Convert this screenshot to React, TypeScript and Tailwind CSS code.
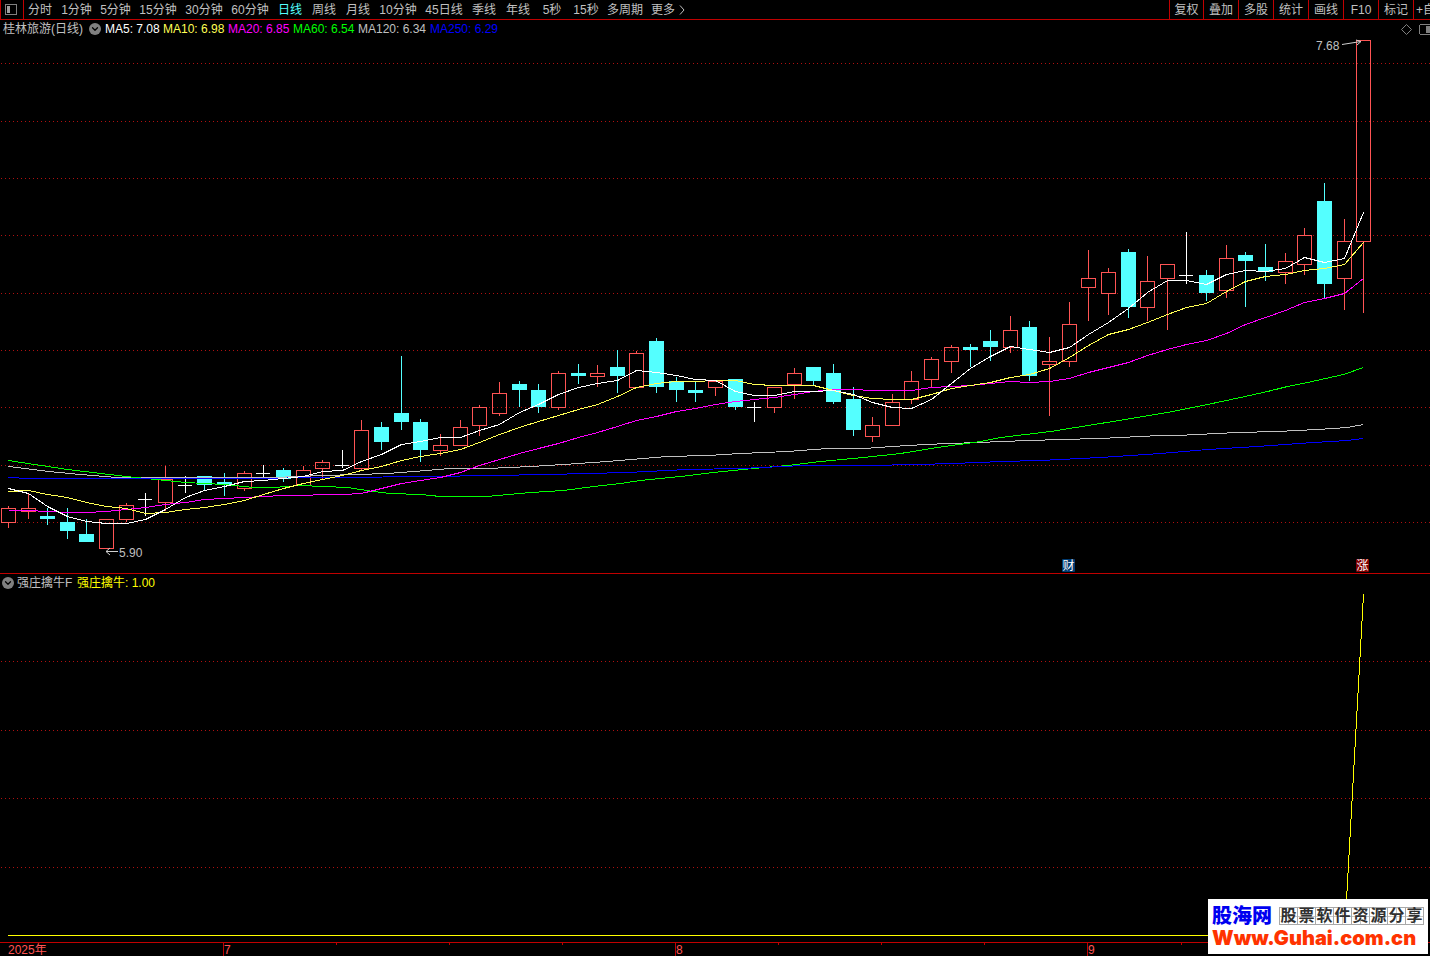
import { ChevronDown } from "lucide-react";
import clsx from "clsx";

const periods = [
  { label: "分时", width: "w-[26px]" },
  { label: "1分钟", width: "w-[31px]" },
  { label: "5分钟", width: "w-[31px]" },
  { label: "15分钟", width: "w-[38px]" },
  { label: "30分钟", width: "w-[38px]" },
  { label: "60分钟", width: "w-[38px]" },
  { label: "日线", width: "w-[26px]", active: true },
  { label: "周线", width: "w-[26px]" },
  { label: "月线", width: "w-[26px]" },
  { label: "10分钟", width: "w-[38px]" },
  { label: "45日线", width: "w-[38px]" },
  { label: "季线", width: "w-[26px]" },
  { label: "年线", width: "w-[26px]" },
  { label: "5秒", width: "w-[26px]" },
  { label: "15秒", width: "w-[26px]" },
  { label: "多周期", width: "w-[36px]" },
];

const tools = ["复权", "叠加", "多股", "统计", "画线", "F10", "标记"];

const legend = [
  { text: "MA5: 7.08", style: "w-[58px] text-white" },
  { text: "MA10: 6.98", style: "w-[65px] text-[#ffff54]" },
  { text: "MA20: 6.85", style: "w-[65px] text-[#ff00ff]" },
  { text: "MA60: 6.54", style: "w-[65px] text-[#00ff00]" },
  { text: "MA120: 6.34", style: "w-[72px] text-[#c0c0c0]" },
  { text: "MA250: 6.29", style: "w-[72px] text-[#0000ff]" },
];

type Kind = "up" | "down" | "flat";
type Candle = [kind: Kind, high: number, top: number, bottom: number, low: number];
type Point = [number, number];

// chart units, y grows downwards
const candles: Candle[] = [
  ["up", 506, 508, 522, 527],
  ["up", 493, 508, 511, 518],
  ["down", 508, 516, 518, 524],
  ["down", 508, 522, 530, 538],
  ["down", 519, 534, 541, 541],
  ["up", 519, 519, 548, 548],
  ["up", 503, 505, 519, 521],
  ["flat", 493, 499, 499, 515],
  ["up", 466, 479, 502, 510],
  ["flat", 476, 485, 485, 492],
  ["down", 476, 476, 484, 490],
  ["down", 473, 482, 484, 495],
  ["up", 471, 473, 488, 490],
  ["flat", 465, 473, 473, 476],
  ["down", 468, 470, 478, 481],
  ["up", 466, 470, 485, 485],
  ["up", 460, 462, 468, 479],
  ["flat", 450, 465, 465, 467],
  ["up", 420, 430, 468, 469],
  ["down", 422, 427, 441, 449],
  ["down", 356, 413, 421, 429],
  ["down", 419, 422, 449, 461],
  ["up", 434, 445, 450, 455],
  ["up", 420, 427, 445, 445],
  ["up", 405, 407, 425, 435],
  ["up", 382, 393, 413, 415],
  ["down", 381, 384, 389, 406],
  ["down", 384, 390, 406, 412],
  ["up", 371, 373, 407, 409],
  ["down", 364, 373, 375, 383],
  ["up", 365, 373, 376, 386],
  ["down", 350, 367, 375, 392],
  ["up", 351, 353, 387, 387],
  ["down", 338, 341, 386, 392],
  ["down", 377, 381, 389, 401],
  ["down", 381, 390, 392, 401],
  ["up", 381, 381, 387, 395],
  ["down", 379, 379, 406, 409],
  ["flat", 402, 407, 407, 421],
  ["up", 387, 387, 407, 412],
  ["up", 368, 373, 384, 398],
  ["down", 367, 367, 380, 385],
  ["down", 364, 373, 401, 403],
  ["down", 387, 399, 429, 435],
  ["up", 417, 425, 436, 441],
  ["up", 394, 402, 425, 425],
  ["up", 371, 381, 399, 403],
  ["up", 357, 359, 379, 386],
  ["up", 345, 347, 361, 372],
  ["down", 344, 347, 349, 366],
  ["down", 330, 341, 346, 360],
  ["up", 316, 330, 347, 352],
  ["down", 321, 327, 375, 380],
  ["up", 337, 361, 364, 415],
  ["up", 302, 324, 361, 366],
  ["up", 250, 278, 287, 320],
  ["up", 268, 272, 293, 314],
  ["down", 249, 252, 306, 317],
  ["up", 256, 281, 307, 320],
  ["up", 264, 264, 278, 329],
  ["flat", 232, 275, 275, 283],
  ["down", 270, 275, 292, 300],
  ["up", 245, 258, 290, 297],
  ["down", 252, 255, 260, 306],
  ["down", 244, 267, 271, 280],
  ["up", 253, 261, 272, 283],
  ["up", 228, 235, 264, 274],
  ["down", 183, 201, 283, 297],
  ["up", 219, 241, 278, 309],
  ["up", 40, 40, 241, 312],
];

const candleX = (i: number) => Math.floor(8.42 + i * 19.642);
const closes = candles.map(([kind, , top, bottom]) => (kind === "down" ? bottom : top));

// lead holds the averages for the days whose window starts before the first candle
function movingAverage(days: number, lead: number[]): Point[] {
  return closes.map((_, i) => {
    if (i < lead.length) return [candleX(i), lead[i]];
    const slice = closes.slice(i - days + 1, i + 1);
    return [candleX(i), Math.round(slice.reduce((a, b) => a + b, 0) / days)];
  });
}

const ma5 = movingAverage(5, [488, 493, 506, 516]);
const ma10 = movingAverage(10, [491, 490, 494, 497, 502, 506, 508, 513, 512]);
const ma20 = movingAverage(
  20,
  [510, 510, 511, 512, 512, 511, 509, 507, 504, 502, 499, 498, 497, 496, 495, 495, 494, 494, 493],
);
const ma60: Point[] = [
  [8, 460], [67, 469], [126, 476], [145, 478], [185, 482], [224, 484], [253, 487], [273, 487],
  [300, 485], [323, 486], [347, 487], [373, 491], [390, 493], [420, 494], [440, 496], [487, 496],
  [497, 495], [530, 492], [563, 490], [593, 486], [620, 483], [640, 480], [680, 476], [713, 472],
  [753, 468], [787, 465], [820, 461], [863, 457], [900, 453], [937, 447], [980, 441], [1000, 437],
  [1050, 431], [1100, 423], [1167, 412], [1207, 404], [1240, 397], [1267, 391], [1287, 386],
  [1307, 382], [1343, 374], [1363, 367],
];
const ma120: Point[] = [
  [8, 466], [48, 471], [80, 474], [117, 477], [140, 477], [273, 477], [297, 476], [323, 475],
  [357, 474], [387, 473], [413, 471], [450, 468], [487, 468], [530, 466], [563, 464], [607, 461],
  [667, 456], [707, 455], [740, 453], [787, 451], [827, 448], [863, 448], [907, 445], [947, 443],
  [980, 442], [1000, 441], [1060, 439], [1100, 438], [1160, 435], [1177, 435], [1237, 432],
  [1277, 431], [1317, 429], [1347, 427], [1363, 424],
];
const ma250: Point[] = [
  [8, 477], [28, 478], [240, 478], [430, 476], [490, 475], [547, 474], [627, 472], [687, 469],
  [740, 468], [803, 465], [863, 465], [920, 464], [980, 462], [1000, 461], [1040, 460],
  [1100, 457], [1160, 453], [1207, 449], [1257, 446], [1313, 442], [1347, 440], [1363, 438],
];

const averages: [string, Point[]][] = [
  ["#c0c0c0", ma120],
  ["#00ff00", ma60],
  ["#0000ff", ma250],
  ["#ff00ff", ma20],
  ["#ffff54", ma10],
  ["#ffffff", ma5],
];

const months = [
  { x: 223, label: "7" },
  { x: 675, label: "8" },
  { x: 1087, label: "9" },
];
const weekTicks = [336, 449, 562, 778, 881, 984, 1181];

function Grid({ rows }: { rows: number[] }) {
  return (
    <g stroke="#b01010" strokeDasharray="1 3">
      {rows.map((y) => (
        <path key={y} d={`M1 ${y + 0.5}H1430`} />
      ))}
    </g>
  );
}

function Polyline({ color, points }: { color: string; points: Point[] }) {
  return (
    <polyline
      fill="none"
      stroke={color}
      points={points.map(([x, y]) => `${x + 0.5},${y + 0.5}`).join(" ")}
    />
  );
}

function CandleShape({ candle, x }: { candle: Candle; x: number }) {
  const [kind, high, top, bottom, low] = candle;
  const c = x + 0.5;
  if (kind === "flat") {
    return <path d={`M${c} ${high}V${low + 1}M${x - 7} ${top + 0.5}H${x + 7}`} stroke="#fff" />;
  }
  if (kind === "down") {
    return (
      <g>
        <path d={`M${c} ${high}V${low + 1}`} stroke="#54ffff" />
        <rect x={x - 7} y={top} width={15} height={bottom - top + 1} fill="#54ffff" />
      </g>
    );
  }
  return (
    <g stroke="#ff5454" fill="none">
      <path d={`M${c} ${high}V${top}M${c} ${bottom}V${low + 1}`} />
      <rect x={x - 6.5} y={top + 0.5} width={14} height={bottom - top} />
    </g>
  );
}

function Flag({ x, label, fill }: { x: number; label: string; fill: string }) {
  return (
    <g>
      <rect x={x} y={559} width={13} height={13} rx={1} fill={fill} />
      <text x={x + 6.5} y={570} textAnchor="middle" fontSize={12} fill="#fff">
        {label}
      </text>
    </g>
  );
}

function PriceChart() {
  return (
    <svg viewBox="0 38 1430 535" className="block h-auto w-full" role="img" aria-label="日线">
      <g shapeRendering="crispEdges">
        <Grid rows={[63, 121, 178, 235, 293, 350, 407, 465, 522]} />
        {candles.map((candle, i) => (
          <CandleShape key={i} candle={candle} x={candleX(i)} />
        ))}
        {averages.map(([color, points]) => (
          <Polyline key={color} color={color} points={points} />
        ))}
      </g>
      <g stroke="#d0d0d0" fill="none">
        <path d="M1342 44.5L1361 41.5M1356 40L1361 41.5L1357 45" />
        <path d="M118 551.5H106M110 548L106 551.5L110 555" />
      </g>
      <g fontSize={12} fill="#c0c0c0">
        <text x={1316} y={50}>7.68</text>
        <text x={119} y={557}>5.90</text>
      </g>
      <Flag x={1062} label="财" fill="#003a70" />
      <Flag x={1356} label="涨" fill="#800000" />
    </svg>
  );
}

function SignalChart() {
  return (
    <svg viewBox="0 591 1430 351" className="block h-auto w-full" role="img" aria-label="强庄擒牛">
      <g shapeRendering="crispEdges">
        <Grid rows={[661, 730, 798, 867]} />
        <Polyline color="#ffff00" points={[[7, 935], [1344, 935], [1363, 594]]} />
      </g>
    </svg>
  );
}

function DateAxis() {
  return (
    <svg viewBox="0 942 1430 14" className="block h-auto w-full" role="img" aria-label="日期">
      <g stroke="#c00000" shapeRendering="crispEdges">
        <path d="M0 942.5H1430" />
        {months.map(({ x }) => (
          <path key={x} d={`M${x + 0.5} 943V956`} />
        ))}
        {weekTicks.map((x) => (
          <path key={x} d={`M${x + 0.5} 943V945`} />
        ))}
      </g>
      <g fontSize={12} fill="#ff5454">
        <text x={8} y={954}>2025年</text>
        {months.map(({ x, label }) => (
          <text key={x} x={x + 1} y={954}>{label}</text>
        ))}
      </g>
    </svg>
  );
}

function MenuDot({ label }: { label: string }) {
  return (
    <button
      aria-label={label}
      className="flex size-3 items-center justify-center rounded-full bg-[#808080] text-black"
    >
      <ChevronDown size={10} strokeWidth={3} />
    </button>
  );
}

function Toolbar() {
  return (
    <nav className="flex h-5 items-stretch border-b border-[#c00000]">
      <button
        aria-label="侧栏"
        className="flex w-6 shrink-0 items-center justify-center border-x border-[#c00000] pr-0.5"
      >
        <svg width="12" height="11" viewBox="0 0 12 11" fill="none" shapeRendering="crispEdges">
          <rect x="0.5" y="0.5" width="11" height="10" rx="1" stroke="#808080" />
          <rect x="2" y="2" width="3" height="7" fill="#a0a0a0" />
        </svg>
      </button>
      <div className="flex gap-2 pl-[3px]">
        {periods.map(({ label, width, active }) => (
          <button
            key={label}
            className={clsx("shrink-0 text-center", width, active && "text-[#54ffff]")}
          >
            {label}
          </button>
        ))}
        <button className="flex shrink-0 items-center gap-1">
          更多
          <svg width="6" height="10" viewBox="0 0 6 10" fill="none" stroke="currentColor">
            <path d="M1 0.5L5 5L1 9.5" />
          </svg>
        </button>
      </div>
      <div className="ml-auto flex">
        {tools.map((label) => (
          <button
            key={label}
            className="w-[35px] shrink-0 border-l border-[#c00000] text-center first:w-[34px]"
          >
            {label}
          </button>
        ))}
        <button className="w-[17px] shrink-0 overflow-hidden border-l border-[#c00000] pl-0.5 text-left">
          +自
        </button>
      </div>
    </nav>
  );
}

function Watermark() {
  return (
    <a
      href="#guhai"
      className="absolute right-0.5 bottom-0.5 block h-[55px] w-[220px] bg-white px-1 pt-1.5"
    >
      <span className="flex items-center gap-[7px]">
        <span className="text-[20px] leading-[22px] font-black text-[#0000f0]">股海网</span>
        <span className="flex border-l border-[#a8a8a8]">
          {[..."股票软件资源分享"].map((char, i) => (
            <span
              key={i}
              className="w-[18px] border-y border-r border-[#a8a8a8] bg-[linear-gradient(#c8c8c8,#c8c8c8),linear-gradient(#c8c8c8,#c8c8c8)] bg-[length:100%_1px,1px_100%] bg-center bg-no-repeat text-center text-[16px] leading-4 font-bold text-[#303030]"
            >
              {char}
            </span>
          ))}
        </span>
      </span>
      <span className="block font-['Inter',sans-serif] text-[20px] leading-[22px] font-black text-[#ff3300]">
        Www.Guhai.com.cn
      </span>
    </a>
  );
}

export default function App() {
  return (
    <main className="relative min-h-screen overflow-hidden bg-black font-['Liberation_Sans','Noto_Sans_CJK_SC',sans-serif] text-[12px] leading-[18px] whitespace-nowrap text-[#c0c0c0]">
      <Toolbar />
      <header className="flex h-[18px] items-center pl-[3px]">
        <h1 className="w-[86px]">桂林旅游(日线)</h1>
        <MenuDot label="指标菜单" />
        <div className="flex pl-1">
          {legend.map(({ text, style }) => (
            <span key={text} className={style}>
              {text}
            </span>
          ))}
        </div>
        <div className="ml-auto flex items-center gap-[7px]">
          <svg width="11" height="11" viewBox="0 0 11 11" fill="none" stroke="#808080">
            <path d="M5.5 0.5L10.5 5.5L5.5 10.5L0.5 5.5Z" />
          </svg>
          <svg width="11" height="11" viewBox="0 0 11 11" fill="none" shapeRendering="crispEdges">
            <path d="M11 0.5H1.5L0.5 1.5V9.5L1.5 10.5H11" stroke="#808080" />
            <rect x="7" y="2" width="4" height="7" fill="#808080" />
          </svg>
        </div>
      </header>
      <PriceChart />
      <section className="border-t border-[#c00000]">
        <header className="flex h-[17px] items-center gap-[3px] pl-0.5">
          <MenuDot label="副图菜单" />
          <h2 className="w-[57px]">强庄擒牛F</h2>
          <span className="text-[#ffff00]">强庄擒牛: 1.00</span>
        </header>
        <SignalChart />
        <DateAxis />
      </section>
      <Watermark />
    </main>
  );
}
